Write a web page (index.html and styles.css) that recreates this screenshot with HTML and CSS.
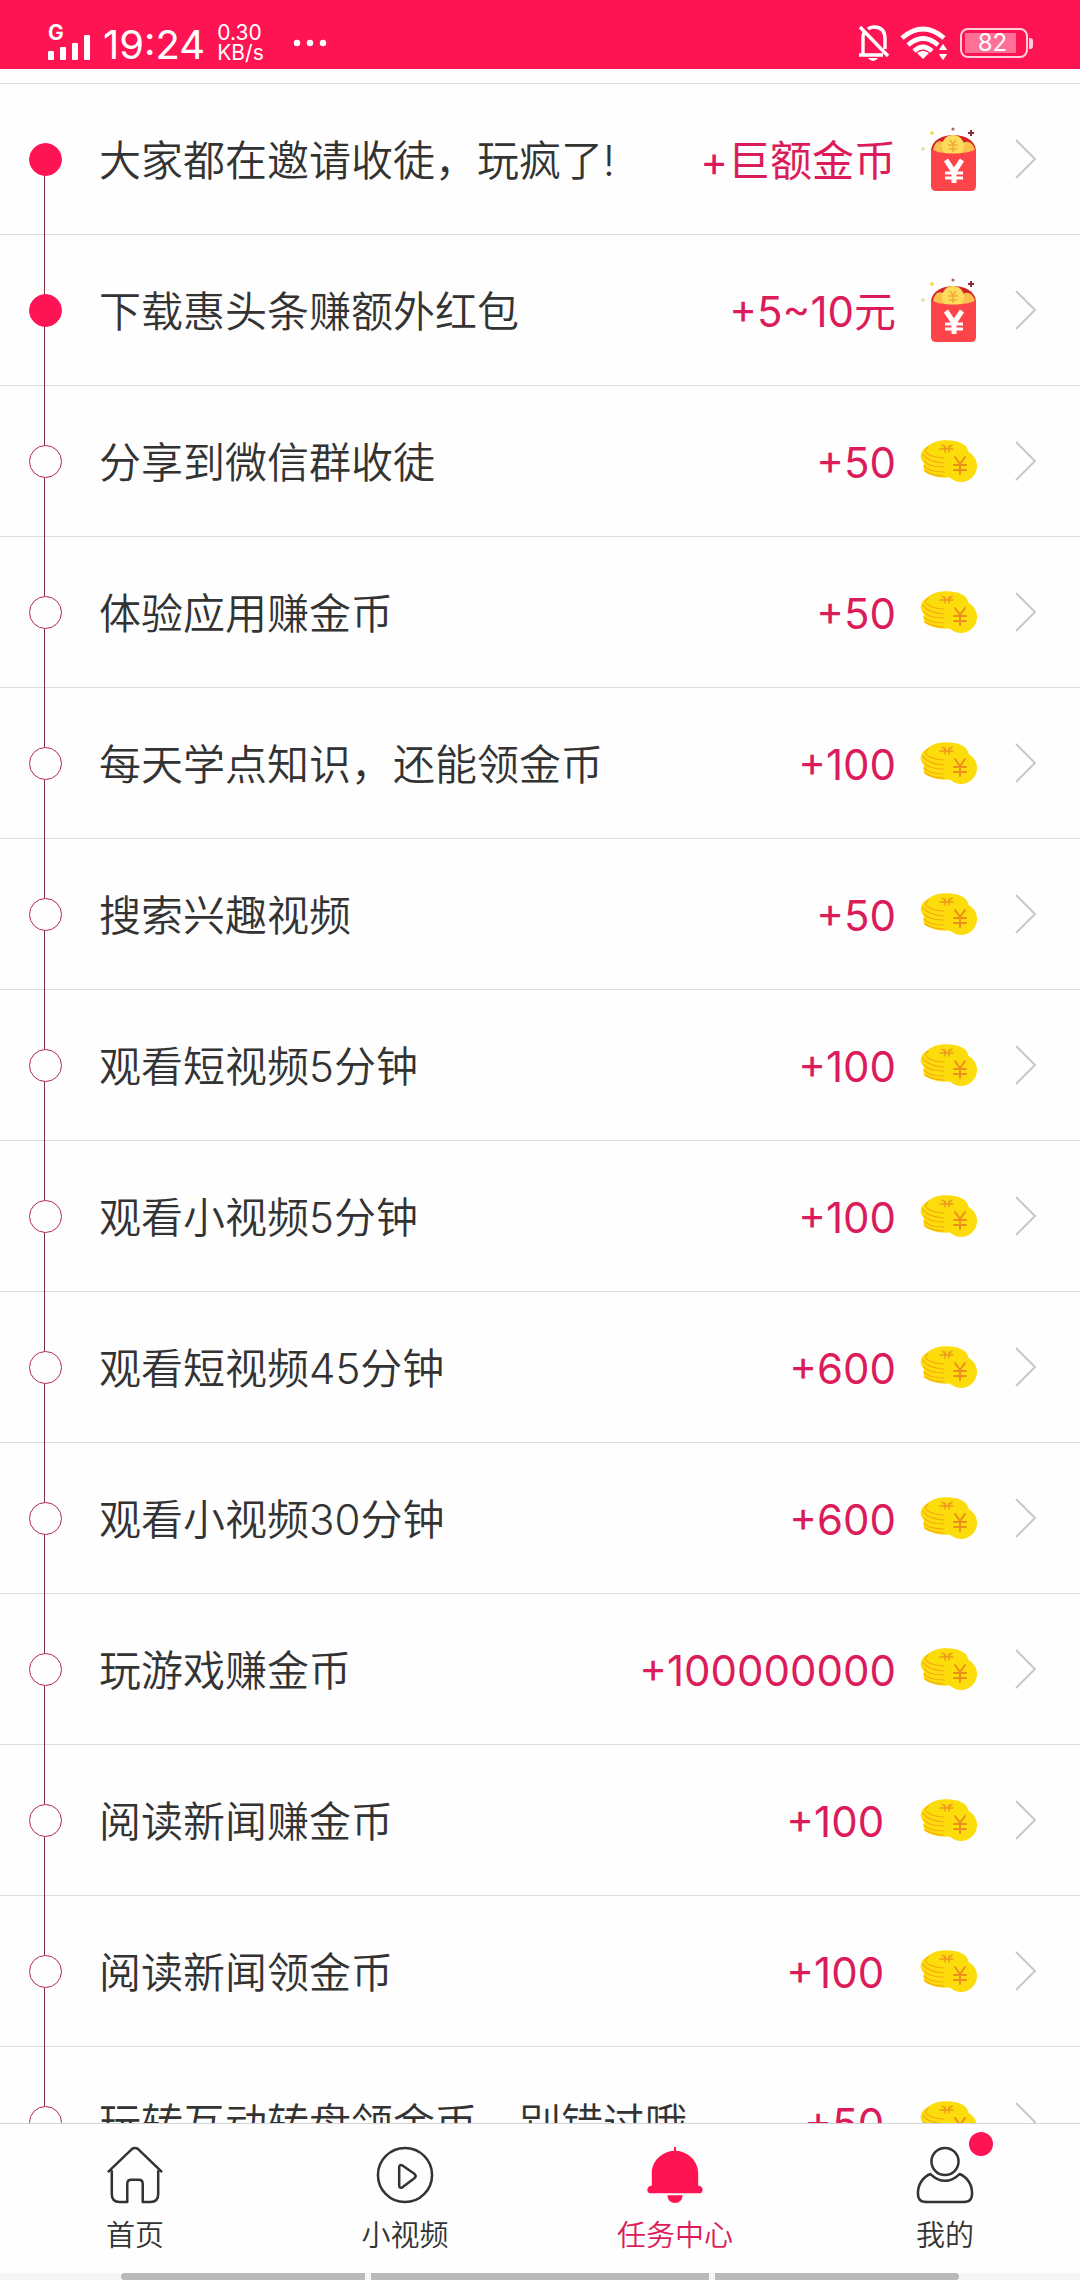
FILE: index.html
```html
<!DOCTYPE html>
<html lang="zh-CN">
<head>
<meta charset="utf-8">
<meta name="viewport" content="width=device-width">
<title>任务中心</title>
<link rel="stylesheet" href="styles.css">
</head>
<body>
<svg class="sprite" aria-hidden="true">
  <symbol id="coins" viewBox="0 0 60 44">
    <path fill="#fddc0c" d="M2 15C3 10 8 8 9 7C16 0 34 0 42 4C49 7 51 12 50 26L34 38C22 40 10 37 5 32C4 28 5 26 5 24C2 21 1 18 2 15Z"/>
    <circle cx="42" cy="27" r="16" fill="#fddc0c"/>
    <g fill="none" stroke="#f7a712" stroke-width="1.2" stroke-linecap="round">
      <path d="M9 8C3 12 8 18 25 19M4 15C7 21 14 23 25 24M5 22C9 27 16 28 25 28M5 27C9 32 16 33 25 33M6 32C11 35 17 37 25 37"/>
      <path stroke="#ec9a1b" stroke-width="1.5" d="M21 10H34M23 6L27 9M33 6L29 10M26 7V13M30 7V13"/>
      <path stroke="#ec901b" stroke-width="2" d="M36 18L41 25L46 18M41 25V35M35 26H47M35 31H47"/>
    </g>
  </symbol>
  <symbol id="packet" viewBox="0 0 60 66">
    <path fill="#d6252a" d="M12 24C14 4 55 4 57 24L50 27H18Z"/>
    <path fill="#f9c04d" d="M14 24C16 14 22 14 25 17H44C48 14 54 16 56 24L44 29H24Z"/>
    <circle cx="34" cy="20" r="11" fill="#fcdc5a"/>
    <path fill="none" stroke="#efac36" stroke-width="1.5" d="M31 14L34 18L37 14M34 18V26M29 19H39M30 23H38"/>
    <path fill="#fd4449" d="M12 23C20 29 49 29 57 23V60Q57 65 52 65H17Q12 65 12 60Z"/>
    <path fill="none" stroke="#fff" stroke-width="5" d="M27 34L35 46L43 34M35 45V57"/>
    <path fill="none" stroke="#fff" stroke-width="3" d="M26 47H44M26 52H44"/>
    <path fill="none" stroke="#8d2a38" stroke-width="2" d="M49 7H55M52 4V10"/>
    <circle cx="34" cy="3" r="1.6" fill="#b5646c"/>
    <circle cx="13" cy="7" r="2" fill="#f0e05a"/>
    <circle cx="4" cy="23" r="2" fill="#e5e5b4"/>
  </symbol>
  <symbol id="chevron" viewBox="0 0 22 40">
    <path fill="none" stroke="#c8c8c8" stroke-width="2" d="M1 1L20 20L1 39"/>
  </symbol>
</svg>

<header class="status">
  <div class="signal">
    <span class="network">G</span>
    <svg width="43" height="35" viewBox="0 0 43 35" fill="#fff" aria-hidden="true"><rect y="26" width="6" height="9" rx="1"/><rect x="12" y="22" width="6" height="13" rx="1"/><rect x="24" y="18" width="6" height="17" rx="1"/><rect x="36" y="10" width="6" height="25" rx="1"/></svg>
  </div>
  <time class="clock">19:24</time>
  <div class="speed">0.30<br>KB/s</div>
  <svg class="more" width="34" height="8" viewBox="0 0 34 8" fill="#fff" aria-hidden="true"><circle cx="4" cy="4" r="3.2"/><circle cx="17" cy="4" r="3.2"/><circle cx="30" cy="4" r="3.2"/></svg>
  <svg class="mute" width="32" height="36" viewBox="0 0 32 36" fill="none" stroke="#fff" stroke-width="3.4" aria-hidden="true"><path d="M5 29V13Q5 8 7 7M10 4Q12 2 16 2Q27 2 27 14V24M1 30H25M2 2L30 31"/><path stroke="none" fill="#fff" d="M10 33H20Q18 36 15 36Q12 36 10 33Z"/></svg>
  <svg class="wifi" width="48" height="34" viewBox="0 0 48 34" fill="none" stroke="#fff" stroke-width="4.6" aria-hidden="true"><path d="M2 12Q23-6 44 12M8 19Q23 6 38 19M14 25Q23 17 32 25"/><path stroke="none" fill="#fff" d="M17 27Q23 23 29 27L23 33Z"/><path stroke="#ff1453" stroke-width="2" fill="#fff" d="M37 25L43 16L49 25ZM37 27L43 36L49 27Z"/></svg>
  <div class="battery"><span class="level">82</span></div>
</header>

<main class="tasks">
  <ol class="list">
    <li><a class="task done" href="#"><span class="marker"></span><span class="name">大家都在邀请收徒，玩疯了!</span><span class="reward">+巨额金币</span><svg class="prize"><use href="#packet"/></svg><svg class="arrow"><use href="#chevron"/></svg></a></li>
    <li><a class="task done" href="#"><span class="marker"></span><span class="name">下载惠头条赚额外红包</span><span class="reward">+5~10元</span><svg class="prize"><use href="#packet"/></svg><svg class="arrow"><use href="#chevron"/></svg></a></li>
    <li><a class="task" href="#"><span class="marker"></span><span class="name">分享到微信群收徒</span><span class="reward">+50</span><svg class="prize"><use href="#coins"/></svg><svg class="arrow"><use href="#chevron"/></svg></a></li>
    <li><a class="task" href="#"><span class="marker"></span><span class="name">体验应用赚金币</span><span class="reward">+50</span><svg class="prize"><use href="#coins"/></svg><svg class="arrow"><use href="#chevron"/></svg></a></li>
    <li><a class="task" href="#"><span class="marker"></span><span class="name">每天学点知识，还能领金币</span><span class="reward">+100</span><svg class="prize"><use href="#coins"/></svg><svg class="arrow"><use href="#chevron"/></svg></a></li>
    <li><a class="task" href="#"><span class="marker"></span><span class="name">搜索兴趣视频</span><span class="reward">+50</span><svg class="prize"><use href="#coins"/></svg><svg class="arrow"><use href="#chevron"/></svg></a></li>
    <li><a class="task" href="#"><span class="marker"></span><span class="name">观看短视频5分钟</span><span class="reward">+100</span><svg class="prize"><use href="#coins"/></svg><svg class="arrow"><use href="#chevron"/></svg></a></li>
    <li><a class="task" href="#"><span class="marker"></span><span class="name">观看小视频5分钟</span><span class="reward">+100</span><svg class="prize"><use href="#coins"/></svg><svg class="arrow"><use href="#chevron"/></svg></a></li>
    <li><a class="task" href="#"><span class="marker"></span><span class="name">观看短视频45分钟</span><span class="reward">+600</span><svg class="prize"><use href="#coins"/></svg><svg class="arrow"><use href="#chevron"/></svg></a></li>
    <li><a class="task" href="#"><span class="marker"></span><span class="name">观看小视频30分钟</span><span class="reward">+600</span><svg class="prize"><use href="#coins"/></svg><svg class="arrow"><use href="#chevron"/></svg></a></li>
    <li><a class="task" href="#"><span class="marker"></span><span class="name">玩游戏赚金币</span><span class="reward">+100000000</span><svg class="prize"><use href="#coins"/></svg><svg class="arrow"><use href="#chevron"/></svg></a></li>
    <li><a class="task" href="#"><span class="marker"></span><span class="name">阅读新闻赚金币</span><span class="reward">+100 </span><svg class="prize"><use href="#coins"/></svg><svg class="arrow"><use href="#chevron"/></svg></a></li>
    <li><a class="task" href="#"><span class="marker"></span><span class="name">阅读新闻领金币</span><span class="reward">+100 </span><svg class="prize"><use href="#coins"/></svg><svg class="arrow"><use href="#chevron"/></svg></a></li>
    <li><a class="task" href="#"><span class="marker"></span><span class="name">玩转互动转盘领金币，别错过哦~</span><span class="reward">+50 </span><svg class="prize"><use href="#coins"/></svg><svg class="arrow"><use href="#chevron"/></svg></a></li>
  </ol>
</main>

<nav class="tabs">
  <a class="tab" href="#">
    <svg class="icon" viewBox="0 0 60 60"><path d="M2 27L27 3Q30 1 33 3L58 27M6 25V50Q6 58 14 58H22V39Q22 35 26 35H34Q38 35 38 39V58H46Q54 58 54 50V25"/></svg>
    首页
  </a>
  <a class="tab" href="#">
    <svg class="icon" viewBox="0 0 60 60"><circle cx="30" cy="30" r="28"/><path d="M24 22V41Q24 44 27 43L40 33Q42 31 40 29L27 20Q24 19 24 22Z"/></svg>
    小视频
  </a>
  <a class="tab active" href="#" aria-current="page">
    <svg class="icon solid" viewBox="0 0 60 60"><path d="M29 1H31V5C45 6 54 17 54 28V41C60 41 60 49 55 49H5C0 49 0 41 6 41V28C6 17 15 6 29 5ZM22 51H38Q37 59 30 59Q23 59 22 51Z"/></svg>
    任务中心
  </a>
  <a class="tab" href="#">
    <span class="badged"><svg class="icon" viewBox="0 0 60 60"><circle cx="30" cy="16" r="14"/><path d="M15 29C7 32 2 40 2 49C2 56 5 58 12 58H48C55 58 58 56 58 49C58 40 53 32 45 29Q38 36 30 36Q22 36 15 29Z"/></svg></span>
    我的
  </a>
</nav>
<div class="gestures" aria-hidden="true"><span></span><span></span><span></span></div>
</body>
</html>
```
FILE: styles.css
```css
* { box-sizing: border-box; }

body {
  margin: 0;
  height: 100vh;
  display: flex;
  flex-direction: column;
  overflow: hidden;
  background: #fefefe;
  color: #333;
  font-family: Inter, "Noto Sans CJK SC", sans-serif;
  font-weight: 350;
}

a { color: inherit; text-decoration: none; }
.sprite { display: none; }

/* Status bar */
.status {
  flex: none;
  display: flex;
  align-items: center;
  height: 69px;
  padding: 16px 48px 0 48px;
  background: #ff1453;
  color: #fff;
  font-weight: 400;
}
.signal { display: grid; margin-right: 12px; }
.signal > * { grid-area: 1 / 1; }
.network { font-size: 21px; line-height: 16px; font-weight: 700; }
.clock { padding-top: 4px; font-size: 40px; line-height: 44px; }
.speed { margin-left: 12px; font-size: 21px; line-height: 20px; }
.more { margin-left: 29px; }
.mute { margin-left: auto; }
.wifi { margin-left: 10px; }
.battery {
  position: relative;
  margin: 0 4px 0 12px;
  width: 68px;
  height: 30px;
  padding: 3px;
  border: 2px solid #ffd0dc;
  border-radius: 8px;
}
.battery::after {
  content: "";
  position: absolute;
  left: 67px;
  top: 8px;
  width: 4px;
  height: 11px;
  border-radius: 0 3px 3px 0;
  background: #ffd0dc;
}
.level {
  display: block;
  width: 51px;
  height: 20px;
  background: #ff6f96;
  font-size: 24px;
  line-height: 20px;
  padding-left: 4px;
  text-align: center;
}

/* Task list */
.tasks { flex: 1; min-height: 0; overflow: hidden; padding-top: 14px; }
.list { margin: 0; padding: 0; list-style: none; }
.task {
  display: flex;
  align-items: center;
  height: 151px;
  padding-right: 43px;
  border-top: 1px solid #dcdcdc;
  font-size: 42px;
  line-height: 60px;
}
.marker {
  position: relative;
  flex: none;
  align-self: stretch;
  display: flex;
  align-items: center;
  width: 99px;
  padding-left: 29px;
}
.marker::before {
  content: "";
  position: absolute;
  left: 44px;
  top: -1px;
  bottom: 0;
  width: 1px;
  background: #7c2f44;
}
li:first-child .marker::before { top: 50%; }
.marker::after {
  content: "";
  position: relative;
  width: 31px;
  height: 31px;
  border: 1px solid #b02a50;
  border-radius: 50%;
  background: #fefefe;
}
.done .marker::after { border-color: #ff1453; background: #ff1453; }
.name, .reward { padding-top: 4px; }
.name { flex: 1; white-space: nowrap; }
.reward { color: #dc1c5a; white-space: pre; font-weight: 400; }
.prize { flex: none; width: 60px; height: 66px; margin-left: 23px; }
.arrow { flex: none; width: 22px; height: 40px; margin-left: 36px; }

/* Bottom tabs */
.tabs {
  flex: none;
  display: grid;
  grid-template-columns: repeat(4, 1fr);
  height: 150px;
  padding-top: 22px;
  border-top: 1px solid #d4d4d4;
}
.tab {
  display: flex;
  flex-direction: column;
  align-items: center;
  gap: 12px;
  font-size: 29px;
  line-height: 40px;
}
.active { color: #dc1c5a; }
.icon {
  display: block;
  width: 58px;
  height: 58px;
  fill: none;
  stroke: #333;
  stroke-width: 2.6;
  stroke-linejoin: round;
}
.solid { fill: #ff1453; stroke: none; }
.badged { position: relative; }
.badged::after {
  content: "";
  position: absolute;
  right: -19px;
  top: -14px;
  width: 24px;
  height: 24px;
  border-radius: 50%;
  background: #ff1453;
}

/* System gesture hints */
.gestures {
  flex: none;
  display: grid;
  grid-template-columns: 244fr 338fr 244fr;
  gap: 6px;
  height: 7px;
  padding: 0 121px;
  background: #f6f6f6;
}
.gestures span { background: #b9b9b9; }
.gestures span:first-child { border-radius: 4px 0 0 4px; }
.gestures span:last-child { border-radius: 0 4px 4px 0; }
```
